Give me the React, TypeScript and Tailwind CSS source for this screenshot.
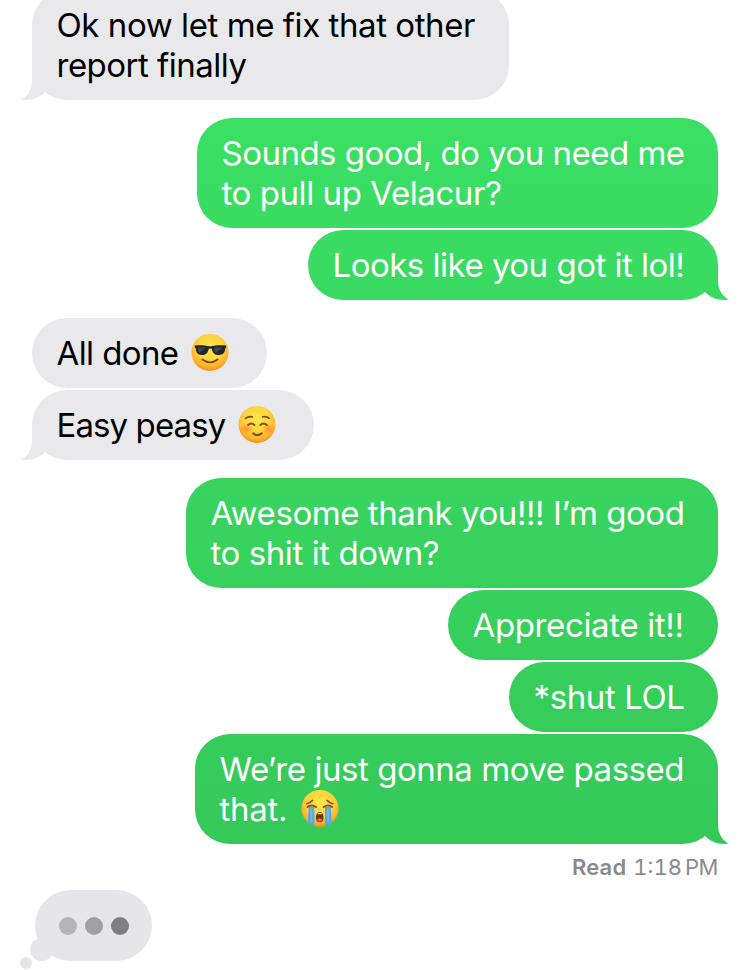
import type { ReactNode } from 'react';
import clsx from 'clsx';

type BubbleProps = {
  mine?: boolean;
  tail?: boolean;
  className?: string;
  children: ReactNode;
};

function Tail({ mine, className }: { mine?: boolean; className?: string }) {
  return (
    <svg
      viewBox="0 0 28 35"
      className={clsx('absolute bottom-0 h-[35px] w-[28px]', mine ? '-right-[11px] -scale-x-100' : '-left-[11px]', className)}
      fill="currentColor"
    >
      <path d="M11 0V16C11 25 6 32 0 34.6C10 36 18.5 33 24 27L28 12L20 0Z" />
    </svg>
  );
}

function Bubble({ mine, tail, className, children }: BubbleProps) {
  return (
    <div
      className={clsx(
        'relative shrink-0 rounded-[35px] py-[15px] text-[33px] leading-[40px] whitespace-nowrap',
        mine
          ? 'self-end bg-linear-to-b from-[#3ce366] to-[#34c557] bg-fixed pl-[24.5px] text-white'
          : 'self-start bg-[#e9e9eb] pl-[24.5px] text-black',
        className,
      )}
    >
      {tail && <Tail mine={mine} className={mine ? 'text-[var(--tail)]' : 'text-[#e9e9eb]'} />}
      <div className="relative">{children}</div>
    </div>
  );
}

function Line({ className, children }: { className?: string; children: ReactNode }) {
  return <div className={clsx('flex h-[40px] items-center', className)}>{children}</div>;
}

function EmojiFace({ id, className, children }: { id: string; className?: string; children: ReactNode }) {
  return (
    <svg viewBox="0 0 40 40" className={clsx('size-[40px] shrink-0', className)} fill="none">
      <defs>
        <radialGradient id={id} cx="50%" cy="36%" r="66%">
          <stop offset="0" stopColor="#ffe64c" />
          <stop offset="0.5" stopColor="#ffd53d" />
          <stop offset="0.8" stopColor="#fdb32b" />
          <stop offset="1" stopColor="#ec8a1c" />
        </radialGradient>
      </defs>
      <circle cx="20" cy="19.4" r="18.5" fill={`url(#${id})`} />
      {children}
    </svg>
  );
}

function Sunglasses({ className }: { className?: string }) {
  return (
    <EmojiFace id="face-cool" className={className}>
      <path d="M12.4 26.6Q20 32.2 27.6 26.6" stroke="#7a4612" strokeWidth="1.9" strokeLinecap="round" />
      <path
        d="M4.8 12.6C9 11.9 14.6 12 17.6 13Q20 13.7 22.4 13C25.4 12 32 11.9 36.2 12.6V14.6L35.3 15.3C34.9 19.8 33.2 22 29 22C24.6 22 22.6 20 21.9 16.2Q20.2 15 18.6 16.2C17.9 20 15.9 22 11.6 22C7.6 22 6.1 19.8 5.7 15.3L4.8 14.6Z"
        fill="#24272a"
      />
      <path d="M8 14.6H16L9.4 19.8C8.1 18.9 7.8 17.1 8 14.6ZM24.4 14.6H32.8L26 19.8C24.7 18.7 24.3 16.9 24.4 14.6Z" fill="#565c60" opacity="0.6" />
    </EmojiFace>
  );
}

function Relaxed({ className }: { className?: string }) {
  return (
    <EmojiFace id="face-relaxed" className={className}>
      <defs>
        <radialGradient id="blush">
          <stop offset="0" stopColor="#ff6a33" stopOpacity="0.65" />
          <stop offset="1" stopColor="#ff7a33" stopOpacity="0" />
        </radialGradient>
      </defs>
      <ellipse cx="9.2" cy="24" rx="7" ry="6" fill="url(#blush)" />
      <ellipse cx="31.4" cy="24" rx="7" ry="6" fill="url(#blush)" />
      <g stroke="#80501a" strokeLinecap="round">
        <path d="M8.6 13.4Q11.2 11 15.4 11.9M25.6 11.9Q29.8 11 32.2 13.4" strokeWidth="1.6" />
        <path d="M11.2 20Q14.2 16.9 17.4 20M23.4 20Q26.6 16.9 29.8 20" strokeWidth="2" />
        <path d="M16.2 28.4Q20.4 31.9 24.6 28.4" strokeWidth="2.1" />
      </g>
    </EmojiFace>
  );
}

function Sobbing({ className }: { className?: string }) {
  return (
    <EmojiFace id="face-sob" className={className}>
      <path d="M8.6 18H14.4V37Q11 36 8 33.6ZM25 18H30.8L31.6 33.8Q28.6 36.2 25 37Z" fill="#4fabe6" />
      <path d="M11.4 19.5V33M28 19.5V33" stroke="#69bff3" strokeWidth="1.8" />
      <path d="M19.7 22.9C16.8 22.9 15.9 26 16 29C16.2 32 17.4 33.2 19.7 33.2C22 33.2 23.2 32 23.4 29C23.5 26 22.6 22.9 19.7 22.9Z" fill="#66320f" />
      <path d="M17 30.6Q19.7 27.2 22.4 30.6Q21.9 32.7 19.7 32.7Q17.5 32.7 17 30.6Z" fill="#d66a58" />
      <path d="M17.6 24.4Q19.7 23 21.8 24.4V25.2H17.6Z" fill="#f0e6d8" />
      <g stroke="#85521a" strokeLinecap="round">
        <path d="M6.8 14.8Q10 14 12.6 11.4M32.8 14.8Q29.6 14 27 11.4" strokeWidth="1.6" />
        <path d="M7.4 18Q11.5 15.2 16 18M23.6 18Q28.1 15.2 32.2 18" strokeWidth="2" />
      </g>
    </EmojiFace>
  );
}

function TypingIndicator() {
  return (
    <div className="relative mt-[10px] ml-[3px] flex h-[71px] w-[117px] shrink-0 items-center gap-[8px] rounded-full bg-[#e5e5ea] pt-px pl-[24px]">
      <span className="absolute bottom-0 -left-[5px] size-[23px] rounded-full bg-[#e5e5ea]" />
      <span className="absolute -bottom-[8px] -left-[15px] size-[12px] rounded-full bg-[#e5e5ea]" />
      <span className="size-[18px] rounded-full bg-[#b5b4b9]" />
      <span className="size-[18px] rounded-full bg-[#a1a0a5]" />
      <span className="size-[18px] rounded-full bg-[#807f84]" />
    </div>
  );
}

export default function App() {
  return (
    <main className="flex h-[970px] w-[750px] flex-col overflow-hidden bg-white px-8 font-['Inter','Liberation_Sans',sans-serif]">
      <Bubble tail className="-mt-[10px] w-[477px]">
        <Line className="tracking-[-0.43px]">Ok now let me fix that other</Line>
        <Line className="tracking-[-0.5px]">report finally</Line>
      </Bubble>

      <Bubble mine className="mt-[18px] w-[521px]">
        <Line className="tracking-[-0.52px]">Sounds good, do you need me</Line>
        <Line className="tracking-[-0.43px]">to pull up Velacur?</Line>
      </Bubble>
      <Bubble mine tail className="mt-[2px] w-[410px] [--tail:#3adb60]">
        <Line className="tracking-[-0.5px]">Looks like you got it lol!</Line>
      </Bubble>

      <Bubble className="mt-[18px] w-[235px]">
        <Line>
          <span className="tracking-[-0.6px]">All done</span>
          <Sunglasses className="absolute left-[133.5px]" />
        </Line>
      </Bubble>
      <Bubble tail className="mt-[2px] w-[282px]">
        <Line>
          <span className="tracking-[-0.9px]">Easy peasy</span>
          <Relaxed className="absolute left-[180.5px]" />
        </Line>
      </Bubble>

      <Bubble mine className="mt-[18px] w-[532px]">
        <Line className="tracking-[-0.43px]">Awesome thank you!!! I’m good</Line>
        <Line className="tracking-[-0.42px]">to shit it down?</Line>
      </Bubble>
      <Bubble mine className="mt-[2px] w-[270px]">
        <Line className="tracking-[-0.36px]">Appreciate it!!</Line>
      </Bubble>
      <Bubble mine className="mt-[2px] w-[209px]">
        <Line className="tracking-[-0.4px]">*shut LOL</Line>
      </Bubble>
      <Bubble mine tail className="mt-[2px] w-[523px] [--tail:#35c959]">
        <Line className="tracking-[-0.45px]">We’re just gonna move passed</Line>
        <Line>
          <span className="tracking-[-0.3px]">that.</span>
          <Sobbing className="absolute left-[80.5px]" />
        </Line>
      </Bubble>

      <div className="mt-[10px] flex h-[26px] shrink-0 items-center justify-end text-[22px] leading-[26px] text-[#8a8a8e]">
        <span className="mr-[7px] font-semibold tracking-[0.2px]">Read</span>
        <span className="tabular-nums">1:18</span>
        <span className="ml-[3px] tracking-[-0.5px]">PM</span>
      </div>

      <TypingIndicator />
    </main>
  );
}
